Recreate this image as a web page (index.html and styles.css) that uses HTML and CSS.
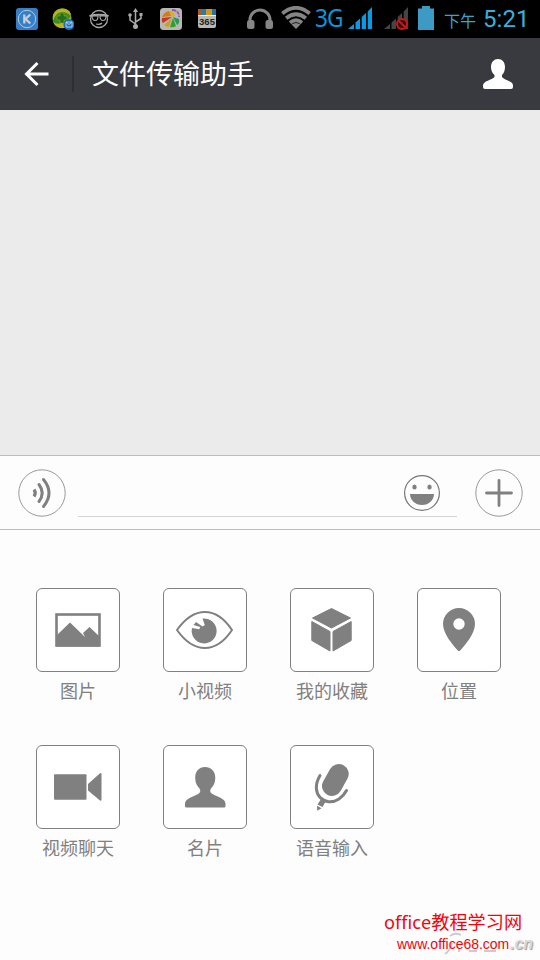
FILE: index.html
```html
<!DOCTYPE html>
<html lang="zh-CN">
<head>
<meta charset="utf-8">
<title>文件传输助手</title>
<link rel="stylesheet" href="styles.css">
</head>
<body>
<div class="screen">
  <header class="status">
    <div class="notices">
      <svg width="22" height="22" viewBox="0 0 22 22"><rect width="22" height="22" rx="3" fill="#357fc9"/><circle cx="11" cy="11" r="8.7" fill="none" stroke="#b9c6d4" stroke-width="1"/><path d="M8.3 6.500v9M14.300 6.500 9.500 11l4.800 4.500" fill="none" stroke="#c8ced4" stroke-width="2.300"/></svg>
      <svg width="22" height="22" viewBox="0 0 22 22"><circle cx="10" cy="10" r="9.700" fill="#3c8c25"/><path d="M1 7Q5-1 14 1q5 2 5 7-4-4-9-4-6 0-9 9zM1 14q4 3 8 1 6-1 10-7 0 10-7 12-8 1-11-6z" fill="#bdb020"/><path d="M8 5h4v3h3v4h-3v3H8v-3H5V8h3z" fill="#246f1d" stroke="#8fa525" stroke-width=".6"/><circle cx="17" cy="16.500" r="5.500" fill="#176fbd"/><path d="M14 14h6v5h-6zl3 2.500 3-2.500" fill="none" stroke="#bdd0df"/></svg>
      <svg width="22" height="22" viewBox="0 0 22 22" fill="none" stroke="#a5a5a5"><circle cx="11" cy="11" r="8.500" stroke-width="1.300"/><path d="M1.500 8Q11 5.500 20.500 8" stroke-width="2"/><path d="M4 8h6q0 4.500-2.600 4.500Q4 12.500 4 8zM12 8h6q0 4.500-3 4.500T12 8zM8 16q4 1 6-1" stroke-width="1.200"/></svg>
      <svg width="22" height="22" viewBox="0 0 22 22" fill="none" stroke="#aaa" stroke-width="1.500"><path d="M11.500 3v16M11.500 16 6 12V8M11.500 14l5.500-3.500V7"/><path d="m11.500 0 2.500 4H9zM15.500 5h3v3h-3z" fill="#aaa" stroke="none"/><circle cx="6" cy="7" r="1.800" fill="#aaa" stroke="none"/><circle cx="11.500" cy="18.500" r="2.500" fill="#aaa" stroke="none"/></svg>
      <svg width="22" height="22" viewBox="0 0 22 22"><rect width="22" height="22" rx="3.500" fill="#b7b7b4"/><path d="M2 9Q4 4 9 3l2 5z" fill="#d87913"/><path d="M9 3q5 0 6 5l-3 1z" fill="#d7b21a"/><path d="M2 10l10-1-9 6q-2-2-1-5z" fill="#c93424"/><path d="M4 17l8-7-3 9q-3 0-5-2z" fill="#c7a41c"/><path d="M10 19l3-9 3 8q-3 2-6 1z" fill="#2f9f2d"/><path d="m13 9 6 2q1 4-2 6z" fill="#269b53"/><path d="M12 2q7 0 7 7" fill="none" stroke="#9950b4" stroke-width="1.800" stroke-dasharray="4 1"/></svg>
      <svg width="22" height="22" viewBox="0 0 22 22"><rect x="2" y="2" width="18" height="18" rx="2" fill="#b7b7b4"/><path d="M2 1h6v6H2z" fill="#b5561f"/><path d="M5 1h5v6H5z" fill="#277bad"/><path d="M10 1h6v6h-6z" fill="#d39a18"/><path d="M16 1h4v6h-4z" fill="#286fa5"/><path d="M2 7.500h18" stroke="#eee"/><text x="11" y="17" class="calendar-number">365</text></svg>
    </div>
    <div class="signals">
      <svg class="headphones" width="26" height="22" viewBox="0 0 26 22"><path d="M3 16v-4a10 10 0 0 1 20 0v4" fill="none" stroke="#858585" stroke-width="3"/><rect y="12" width="7.500" height="9" rx="2.500" fill="#858585"/><rect x="18.500" y="12" width="7.500" height="9" rx="2.500" fill="#858585"/></svg>
      <svg class="wifi" width="30" height="24" viewBox="0 0 30 24" fill="none" stroke="#858585" stroke-width="3.800"><path d="M1.300 7.500Q15-3.800 28.700 7.500M5.200 12.200q9.800-8 19.600 0M9 16.800q6-5 12 0"/><path d="m15 23-4.500-4.500q4.500-3 9 0z" fill="#858585" stroke="none"/></svg>
      <span class="network">3G</span>
      <svg class="bars" width="24" height="24" viewBox="0 0 24 24" fill="#079be5"><path d="M0 23 6 18v5zM7.500 16.500l4.500-4V23H7.500zM13.700 11 18 7v16h-4.300zM19.700 5.500 24 1v22h-4.300z"/></svg>
      <svg class="bars-off" width="25" height="24" viewBox="0 0 25 24" fill="#444"><path d="M0 23 6 18v5zM7.500 16.500l4.500-4V23H7.500zM13.700 11 18 7v16h-4.300zM19.700 5.500 24 1v22h-4.300z"/><circle cx="18" cy="18" r="5" fill="#331111" stroke="#cf1515" stroke-width="2"/><path d="m14.500 14.500 7 7" stroke="#cf1515" stroke-width="2"/></svg>
      <svg class="battery" width="16" height="24" viewBox="0 0 16 24"><path d="M0 2.500h4V0h8v2.500h4V24H0z" fill="#3c9ac5"/></svg>
      <span class="period">下午</span><span class="clock">5:21</span>
    </div>
  </header>
  <nav class="titlebar">
    <svg class="back" width="26" height="26" viewBox="0 0 26 26" fill="none" stroke="#fff" stroke-width="3"><path d="M13.500 2 2.500 13l11 11M2.500 13h22"/></svg>
    <i class="divider"></i>
    <h1>文件传输助手</h1>
    <svg class="contact" width="30" height="30" viewBox="0 0 30 30"><path d="M15 0c4.200 0 7 3 7 8 0 4-1.500 6.500-3 8v2c2 3 11 4 11 8.500V28q0 2-2 2H2q-2 0-2-2v-1.500C0 22 9 21 11.500 18v-2C9.800 14.500 8 12 8 8c0-5 3-8 7-8z" fill="#fff"/></svg>
  </nav>
  <main class="chat"></main>
  <section class="composer">
    <svg class="round" width="48" height="48" viewBox="0 0 48 48" fill="none" stroke="#808080"><circle cx="24" cy="24" r="23.200" stroke="#999"/><path d="M16 20.500q2.500 3.500 0 7" stroke-width="3.200"/><path d="M21 15.500q6.400 8.500 0 17M25.500 10.500q11 13.500 0 27" stroke-width="3" stroke-linecap="round"/></svg>
    <div class="field"><svg width="36" height="36" viewBox="0 0 36 36"><circle cx="18" cy="18" r="17.400" fill="none" stroke="#777" stroke-width="1.200"/><ellipse cx="10.500" cy="12" rx="2.200" ry="2.600" fill="#808080"/><ellipse cx="25.500" cy="12" rx="2.200" ry="2.600" fill="#808080"/><path d="M6 19h24c0 6-5 11-12 11S6 25 6 19z" fill="#808080"/></svg></div>
    <svg class="round" width="48" height="48" viewBox="0 0 48 48" fill="none" stroke="#808080"><circle cx="24" cy="24" r="23.200" stroke="#999"/><path d="M24 11.500v25M11.500 24h25" stroke-width="2.800" stroke-linecap="round"/></svg>
  </section>
  <section class="tools">
    <div class="tool"><div class="tile"><svg viewBox="0 0 84 84"><rect x="20.500" y="26.500" width="43" height="31" fill="none" stroke="#808080" stroke-width="2.600"/><path d="M20 48 34 34.500 49 49l-2-4 6.500-6L64 49v9.500H20z"/></svg></div><span>图片</span></div>
    <div class="tool"><div class="tile"><svg viewBox="0 0 84 84"><path d="M14 42C31 18 53 18 69 42 53 66 31 66 14 42z" fill="none" stroke="#808080" stroke-width="2"/><path d="M39.500 30.500A12.500 12.500 0 1 1 29 40l7.500 1.300q0-1.300.8-2.300l-6.800-2 2.500-3 6.500 4.500q1-1 2.300-1.300z"/></svg></div><span>小视频</span></div>
    <div class="tool"><div class="tile"><svg viewBox="0 0 84 84" stroke="#808080" stroke-linejoin="round"><path d="M41.500 20.500 60.500 30 41.500 40 22.500 30zM21.800 33.500l18.200 10V63l-18.200-10.500zM61.200 33.500 43 43.500V63l18.200-10.500z"/></svg></div><span>我的收藏</span></div>
    <div class="tool"><div class="tile"><svg viewBox="0 0 84 84"><path fill-rule="evenodd" d="M42 20a16 16 0 0 1 16 16c0 10-10 21-14.800 26.500q-1.200 1.200-2.400 0C36 57 26 46 26 36a16 16 0 0 1 16-16zm0 10.300a5.700 5.700 0 1 0 0 11.400 5.700 5.700 0 0 0 0-11.400z"/></svg></div><span>位置</span></div>
    <div class="tool"><div class="tile"><svg viewBox="0 0 84 84"><rect x="18" y="29.300" width="32.500" height="25.500" rx="1"/><path d="M52 39 64 28.200q1.500-.5 1.500 1v25.500q0 1.300-1.500.8L52 45.500z"/></svg></div><span>视频聊天</span></div>
    <div class="tool"><div class="tile"><svg viewBox="0 0 84 84"><path d="M42 22c6 0 10.300 4 10.300 11 0 5-2 8-4.300 10.500-1.500 2-.8 4 1 5.200 4.500 3 13.500 4.500 13.500 10V61q0 1.500-1.500 1.500H23.500Q22 62.500 22 61v-2.300c0-5.500 9-7 13.500-10 1.800-1.200 2.500-3.200 1-5.200-2.300-2.500-4.300-5.500-4.300-10.500 0-7 3.800-11 9.800-11z"/></svg></div><span>名片</span></div>
    <div class="tool"><div class="tile"><svg viewBox="0 0 84 84"><path d="M48.700 29 42 41" fill="none" stroke="#808080" stroke-width="20" stroke-linecap="round"/><path d="M30 30.500C19 49 35 63 49 54q4.500-3 7.500-8.500" fill="none" stroke="#808080" stroke-width="3" stroke-linecap="round"/><path d="m32 52.500 4.500 2.500-4 7-5-2.500zM27 60.800l4.500 2.500-4.300 2.500z"/></svg></div><span>语音输入</span></div>
  </section>
  <div class="watermark">
    <svg class="swash" width="84" height="28" viewBox="0 0 84 28" fill="none" stroke="#ccc" stroke-width="1.800"><path d="M14 5q5-4 11-1M9 23q5-3 7-11M23 18v3M33 20h8M48 20h12"/></svg>
    <span class="domain">.cn</span>
    <div class="brand">office教程学习网</div>
    <div class="url">www.office68.com</div>
  </div>
</div>
</body>
</html>
```
FILE: styles.css
```css
* { box-sizing: border-box; }
body { margin: 0; }
svg { display: block; flex: none; }
.screen { position: relative; width: 540px; height: 960px; display: flex; flex-direction: column; overflow: hidden; background: #fdfdfd; font-family: "Noto Sans CJK SC", sans-serif; }
.status { height: 38px; flex: none; display: flex; background: #000; padding-left: 16px; }
.notices { display: flex; gap: 14px; padding-top: 8px; width: 231px; }
.calendar-number { font: bold 9.500px "Liberation Sans", sans-serif; text-anchor: middle; fill: #222; }
.signals { display: flex; align-items: center; height: 36px; white-space: nowrap; }
.headphones { margin-top: 2px; }
.wifi { margin-left: 8px; }
.network { width: 32px; margin: -2px 0 0 4px; color: #0795dc; font: 25px/36px "Noto Sans", sans-serif; letter-spacing: -1px; transform: scaleX(.91); transform-origin: left; }
.bars { width: 24px; margin-left: 1px; }
.bars-off { margin-left: 12px; }
.battery { margin-left: 9px; }
.period { margin: 4px 0 0 10px; width: 39px; font-size: 16px; line-height: 32px; color: #35a5cf; }
.clock { margin-top: 2px; color: #38b0dc; font: 24px/36px Roboto, sans-serif; letter-spacing: .1px; }
.titlebar { height: 72px; flex: none; display: flex; align-items: center; background: #393a3f; padding: 0 27px 0 24px; }
.divider { width: 2px; height: 36px; background: #2d2e32; margin: 0 18px 0 22px; }
h1 { margin: -2px 0 0; color: #fff; font-size: 27px; line-height: 40px; font-weight: 400; }
.contact { margin-left: auto; }
.chat { height: 345px; flex: none; background: #ebebeb; }
.composer { height: 75px; flex: none; display: flex; align-items: center; background: #fdfdfd; border-top: 1px solid #bdbdbd; border-bottom: 1px solid #bdbdbd; padding: 0 17px 0 18px; }
.field { width: 379px; height: 48px; margin: 0 18px 0 12px; border-bottom: 1px solid #d4d4d4; display: flex; align-items: center; justify-content: flex-end; padding: 1px 17px 0 0; }
.tools { display: grid; grid-template-columns: repeat(4, 84px); grid-auto-rows: 157px; column-gap: 43px; padding: 58px 0 0 36px; }
.tool { display: flex; flex-direction: column; align-items: center; color: #808080; font-size: 18px; line-height: 26px; white-space: nowrap; }
.tile { width: 84px; height: 84px; margin-bottom: 5px; border: 1px solid #808080; border-radius: 6px; background: #fff; }
.tile svg { width: 84px; height: 84px; margin: -1px; fill: #808080; }
.watermark { position: absolute; left: 384px; top: 909px; width: 156px; height: 51px; color: #fa0008; }
.brand { position: relative; font: 18.200px/27px "Noto Sans", "Noto Sans CJK SC", sans-serif; white-space: nowrap; }
.url { position: relative; margin-left: 13px; font: 14px/16px "Liberation Sans", sans-serif; letter-spacing: -.02px; white-space: nowrap; }
.domain { position: absolute; left: 126px; top: 25px; color: #d8d8d8; text-shadow: 1px 1px 1px #999; font: italic bold 16px/20px "Liberation Sans", sans-serif; }
.swash { position: absolute; left: 52px; top: 22px; }
```
